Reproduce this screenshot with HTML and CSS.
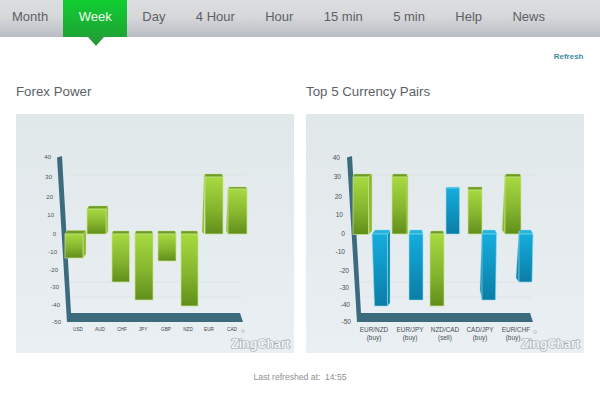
FILE: index.html
```html
<!DOCTYPE html>
<html lang="en">
<head>
<meta charset="utf-8">
<title>Forex Power</title>
<link rel="stylesheet" href="styles.css">
</head>
<body>
<nav class="nav">
  <a class="nav-item">Month</a>
  <a class="nav-item active">Week</a>
  <a class="nav-item">Day</a>
  <a class="nav-item">4 Hour</a>
  <a class="nav-item">Hour</a>
  <a class="nav-item">15 min</a>
  <a class="nav-item">5 min</a>
  <a class="nav-item">Help</a>
  <a class="nav-item">News</a>
</nav>
<div class="toolbar"><a class="refresh">Refresh</a></div>
<main class="charts">
  <section class="chart-card">
    <h2 class="chart-title">Forex Power</h2>
    <svg class="chart" viewBox="16 114 278 239" width="278" height="239">
      <defs>
        <linearGradient id="gf" x1="0" y1="0" x2="0" y2="1"><stop offset="0" stop-color="#a6da40"/><stop offset="0.55" stop-color="#86b52e"/><stop offset="1" stop-color="#608e1b"/></linearGradient>
        <linearGradient id="bf" x1="0" y1="0" x2="0" y2="1"><stop offset="0" stop-color="#15addc"/><stop offset="0.6" stop-color="#0e90bd"/><stop offset="1" stop-color="#0c7da4"/></linearGradient>
        <linearGradient id="pf" x1="0" y1="0" x2="0" y2="1"><stop offset="0" stop-color="#e1e8ea"/><stop offset="1" stop-color="#e9eff2"/></linearGradient>
      </defs>
      <rect class="panel" x="16" y="114" width="278" height="239"/>
      <path class="grid" d="M70 175H246M70 282H242M70 297H242"/>
      <polygon class="axis" points="57,157.500 62,156 71,313 240,313 243,322 67,322"/>
      <g class="y y-small">
        <text x="51" y="159">40</text><text x="52" y="179">30</text><text x="53" y="199">20</text><text x="54" y="217">10</text><text x="56" y="236">0</text>
        <text x="57" y="254">-10</text><text x="58" y="272">-20</text><text x="59" y="289">-30</text><text x="60" y="307">-40</text><text x="61" y="324">-50</text>
      </g>
      <g class="x-small">
        <text x="78" y="331">USD</text><text x="100" y="331">AUD</text><text x="122" y="331">CHF</text><text x="143" y="331">JPY</text>
        <text x="166" y="331">GBP</text><text x="188" y="331">NZD</text><text x="209" y="331">EUR</text><text x="232" y="331">CAD</text>
      </g>
      <g>
        <polygon class="g-side" points="83,234 86,231 86,254 83,258"/><polygon class="g-cap" points="65,234 67,230.500 86,230.500 83,234"/><rect class="g-front" x="65" y="234" width="18" height="24"/>
        <polygon class="g-side" points="106,209 108,206 108,232 106,234"/><polygon class="g-cap" points="87,209 89,206 108,206 106,209"/><rect class="g-front" x="87" y="209" width="19" height="25"/>
        <polygon class="g-cap" points="112,234 113,231 129,231 129,234"/><rect class="g-front" x="112" y="234" width="17.500" height="48"/>
        <polygon class="g-cap" points="135,234 136,231 152,231 153,234"/><rect class="g-front" x="135" y="234" width="18" height="66"/>
        <polygon class="g-cap" points="158,234 158,231 175,231 176,234"/><rect class="g-front" x="158" y="234" width="18" height="27"/>
        <polygon class="g-cap" points="181,234 181,231 197,231 198,234"/><rect class="g-front" x="181" y="234" width="17" height="72"/>
        <polygon class="g-side" points="204,177 205,174 204,234 202,232"/><polygon class="g-cap" points="205,177 205,174 222,174 223,177"/><rect class="g-front" x="205" y="177" width="18" height="57"/>
        <polygon class="g-side" points="228,189 229,187 228,234 226,231"/><polygon class="g-cap" points="229,189 229,187 246,187 247,189"/><rect class="g-front" x="228" y="189" width="19" height="45"/>
      </g>
      <circle class="mark" cx="243" cy="331" r="1.500"/>
      <text class="brand" x="231" y="348">ZingChart</text>
    </svg>
  </section>
  <section class="chart-card">
    <h2 class="chart-title">Top 5 Currency Pairs</h2>
    <svg class="chart" viewBox="306 114 278 239" width="278" height="239">
      <rect class="panel" x="306" y="114" width="278" height="239"/>
      <path class="grid" d="M360 175H536M360 282H532M360 297H532"/>
      <polygon class="axis" points="347,157.500 352,156 361,313 530,313 533,322 357,322"/>
      <g class="y y-big">
        <text x="340" y="159.500">40</text><text x="341" y="179">30</text><text x="342" y="199">20</text><text x="343" y="217">10</text><text x="345" y="236">0</text>
        <text x="345" y="254">-10</text><text x="349" y="273">-20</text><text x="349" y="290">-30</text><text x="350" y="307">-40</text><text x="351" y="324">-50</text>
      </g>
      <g class="x-big">
        <text x="374" y="332">EUR/NZD</text><text x="374" y="340">(buy)</text>
        <text x="410" y="332">EUR/JPY</text><text x="410" y="340">(buy)</text>
        <text x="445" y="332">NZD/CAD</text><text x="445" y="340">(sell)</text>
        <text x="480" y="332">CAD/JPY</text><text x="480" y="340">(buy)</text>
        <text x="516" y="332">EUR/CHF</text><text x="513" y="340">(buy)</text>
      </g>
      <g>
        <polygon class="g-side" points="368,177 372,174 372,231 369,234"/><polygon class="g-cap" points="353,177 354,174 372,174 368,177"/><rect class="g-front" x="353" y="177" width="15.500" height="57.500"/>
        <polygon class="b-side" points="387.500,234 390,230 390,303 387.500,306"/><polygon class="b-cap" points="372,234 375,230 390,230 387.500,234"/><polygon class="b-front" points="372,234 387.500,234 387.500,306 374.500,306"/>
        <rect class="g-side" x="406" y="176" width="2" height="58"/><polygon class="g-cap" points="392,177 393,174 407,174 407,177"/><rect class="g-front" x="392" y="177" width="15" height="57"/>
        <polygon class="b-cap" points="409,234 410,230 422,230 423,234"/><rect class="b-front" x="409" y="234" width="14" height="66"/>
        <polygon class="g-cap" points="430,234 431,231 443,231 444,234"/><rect class="g-front" x="430" y="234" width="14" height="72"/>
        <polygon class="b-cap" points="446,188 447,187 459,187 460,188"/><rect class="b-front" x="446" y="188" width="13.500" height="46"/>
        <polygon class="g-cap" points="468,190 468,187 482,187 482,190"/><rect class="g-front" x="468" y="190" width="14" height="44"/>
        <polygon class="b-side" points="483,234 482,231 480,290 482,300"/><polygon class="b-cap" points="482,234 483,230 495,230 497,234"/><polygon class="b-front" points="482,234 496.500,234 495.500,300 482,300"/>
        <polygon class="g-side" points="505,177 505,174 502,230 505,234"/><polygon class="g-cap" points="505,177 506,174 520,174 521,177"/><rect class="g-front" x="505" y="177" width="16" height="57"/>
        <polygon class="b-side" points="519,234 519,231 516,278 519,282"/><polygon class="b-cap" points="519,234 520,230 531,230 533,234"/><polygon class="b-front" points="519,234 533,234 532,282 519,282"/>
      </g>
      <circle class="mark" cx="535" cy="332" r="1.500"/>
      <text class="brand" x="521" y="348">ZingChart</text>
    </svg>
  </section>
</main>
<footer class="footer">Last refreshed at:&nbsp; 14:55</footer>
</body>
</html>
```
FILE: styles.css
```css
* { box-sizing: border-box; }
html, body { margin: 0; padding: 0; background: #fff; }
body { width: 600px; height: 407px; overflow: hidden; font-family: "Liberation Sans", Arial, sans-serif; }
.nav { display: flex; height: 37px; background: linear-gradient(#dcdde0 0%, #d6d8da 45%, #b9bcc4 100%); }
.nav-item { position: relative; padding: 0 15.200px; font-size: 13px; line-height: 34px; color: #5c6066; }
.nav-item:first-child { padding-left: 12px; }
.nav-item.active { padding: 0 15.400px; color: #f2fbf2; background: linear-gradient(#0fce30 0%, #1ea434 100%); }
.nav-item.active::after { content: ""; position: absolute; left: 24.500px; top: 37px; border-style: solid; border-width: 9px 8px 0 8px; border-color: #259d38 transparent transparent transparent; }
.toolbar { display: flex; justify-content: flex-end; padding: 15px 16.500px 0 0; height: 45px; }
.refresh { font-size: 8px; font-weight: bold; line-height: 10px; color: #3f8ba1; }
.charts { display: flex; gap: 12px; padding: 0 16px; }
.chart-card { width: 278px; }
.chart-title { margin: 0 0 13px; font-size: 13.300px; font-weight: normal; line-height: 19px; color: #5b6267; }
.chart { display: block; }
.panel { fill: url(#pf); }
.grid { fill: none; stroke: #d8dfe0; stroke-width: 0.600; }
.axis { fill: #3c6b7e; }
.y text { fill: #4a5054; text-anchor: end; }
.y-small { font-size: 6px; }
.y-big { font-size: 6.600px; }
.x-small text { font-size: 4.700px; fill: #3e4448; text-anchor: middle; }
.x-big text { font-size: 6.400px; fill: #4a5054; text-anchor: middle; }
.g-front { fill: url(#gf); stroke: #c9e68e; stroke-width: 0.700; }
.g-side { fill: #8fb83a; stroke: #c9e68e; stroke-width: 0.400; }
.g-cap { fill: #6f9c22; stroke: #b6d878; stroke-width: 0.400; }
.b-front { fill: url(#bf); stroke: #8fdcf2; stroke-width: 0.600; }
.b-side { fill: #0f86ad; stroke: #8fdcf2; stroke-width: 0.400; }
.b-cap { fill: #25b3dc; stroke: #8fdcf2; stroke-width: 0.400; }
.mark { fill: none; stroke: #a9b3b6; stroke-width: 0.600; }
.brand { font-size: 12.500px; font-weight: bold; fill: #f4f6f7; stroke: #9aa5a9; stroke-width: 1.200px; paint-order: stroke; }
.footer { margin-top: 18px; text-align: center; font-size: 8.600px; line-height: 12px; color: #8c9094; }
```
